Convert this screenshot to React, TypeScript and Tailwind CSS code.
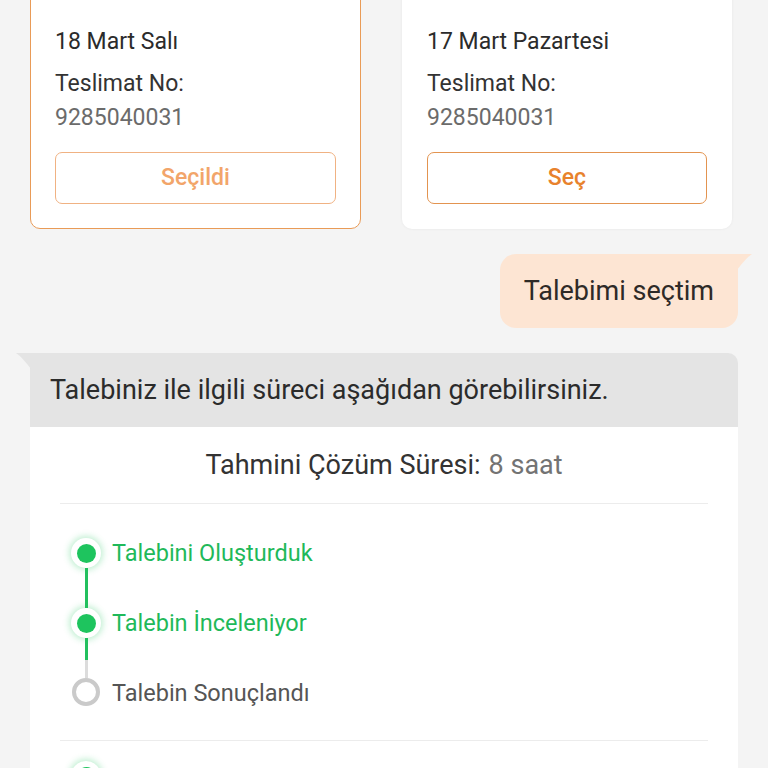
import type { ReactNode } from 'react';

const font = { fontFamily: 'Roboto, "Noto Sans", sans-serif' };

type Slot = {
  date: string;
  no: string;
  selected: boolean;
};

const slots: Slot[] = [
  { date: '18 Mart Salı', no: '9285040031', selected: true },
  { date: '17 Mart Pazartesi', no: '9285040031', selected: false },
];

const steps = [
  { label: 'Talebini Oluşturduk', done: true },
  { label: 'Talebin İnceleniyor', done: true },
  { label: 'Talebin Sonuçlandı', done: false },
];

function SlotCard({ slot }: { slot: Slot }) {
  return (
    <div
      className={
        slot.selected
          ? 'w-[331px] -mt-[30px] rounded-[10px] border-[1.5px] border-[#e99b57] bg-white px-[24px] pb-[24px] pt-[56px]'
          : 'w-[330px] -mt-[30px] rounded-[10px] bg-white px-[25px] pb-[25px] pt-[57px] shadow-[0_0_3px_rgba(0,0,0,0.06)]'
      }
    >
      <div className="text-[23px] leading-[30px] text-[#2b2b2b]">{slot.date}</div>
      <div className="mt-[12px] text-[23px] leading-[30px] text-[#333]">Teslimat No:</div>
      <div className="mt-[4px] text-[23px] leading-[30px] text-[#6b6b6b]">{slot.no}</div>
      <button
        className={
          slot.selected
            ? 'mt-[19px] flex h-[52px] w-full items-center justify-center rounded-[7px] border border-[#f0b283] bg-white text-[23px] font-medium text-[#f2a56a]'
            : 'mt-[19px] flex h-[52px] w-full items-center justify-center rounded-[7px] border border-[#e39450] bg-white text-[23px] font-medium text-[#e8822c]'
        }
      >
        {slot.selected ? 'Seçildi' : 'Seç'}
      </button>
    </div>
  );
}

function Dot({ done }: { done: boolean }) {
  if (!done) {
    return <div className="h-[28px] w-[28px] rounded-full border-[4px] border-[#cacaca] bg-white" />;
  }
  return (
    <div className="flex h-[30px] w-[30px] items-center justify-center rounded-full bg-white shadow-[0_0_6px_2px_rgba(34,197,94,0.28)]">
      <div className="h-[19px] w-[19px] rounded-full bg-[#1ec45e]" />
    </div>
  );
}

function Timeline() {
  return (
    <div className="flex flex-col pl-[41px]">
      {steps.map((step, i) => {
        const next = steps[i + 1];
        return (
          <div key={step.label} className="flex">
            <div className="flex w-[30px] flex-col items-center">
              <Dot done={step.done} />
              {next && (
                <div className="flex w-[3px] flex-1 flex-col">
                  {next.done ? (
                    <div className="flex-1 bg-[#22c05e]" />
                  ) : (
                    <>
                      <div className="h-[22px] bg-[#22c05e]" />
                      <div className="flex-1 bg-[#dcdcdc]" />
                    </>
                  )}
                </div>
              )}
            </div>
            <div
              className={
                step.done
                  ? 'ml-[11px] h-[30px] text-[23.5px] leading-[30px] text-[#1fb95a]'
                  : 'ml-[11px] h-[30px] text-[23.5px] leading-[30px] text-[#555]'
              }
            >
              {step.label}
            </div>
            {next && <div className="h-[70px]" />}
          </div>
        );
      })}
    </div>
  );
}

function Bubble({ children }: { children: ReactNode }) {
  return (
    <div className="flex justify-end pr-[30px]">
      <div className="relative flex h-[74px] items-center rounded-[16px] rounded-tr-none bg-[#fde5d3] px-[24px]">
        <span className="text-[27px] text-[#2e2a27]">{children}</span>
        <svg className="absolute -right-[14px] top-0" width="15" height="16" viewBox="0 0 15 16">
          <path d="M0 0 H15 Q9 4 0 16 Z" fill="#fde5d3" />
        </svg>
      </div>
    </div>
  );
}

export default function App() {
  return (
    <div className="h-[768px] overflow-hidden bg-[#f4f4f4]" style={font}>
      <div className="flex gap-[41px] pl-[30px]">
        {slots.map((s) => (
          <SlotCard key={s.date} slot={s} />
        ))}
      </div>

      <div className="mt-[25px]">
        <Bubble>Talebimi seçtim</Bubble>
      </div>

      <div className="mt-[25px] pl-[30px] pr-[30px]">
        <div className="relative flex h-[74px] items-center rounded-tr-[10px] bg-[#e4e4e4] pl-[20px]">
          <svg className="absolute -left-[14px] top-0" width="15" height="16" viewBox="0 0 15 16">
            <path d="M15 0 H0 Q6 4 15 16 Z" fill="#e4e4e4" />
          </svg>
          <span className="text-[27px] text-[#2b2b2b]">Talebiniz ile ilgili süreci aşağıdan görebilirsiniz.</span>
        </div>
        <div className="bg-white">
          <div className="flex h-[76px] items-center justify-center text-[27px]">
            <span className="text-[#333]">Tahmini Çözüm Süresi:</span>
            <span className="ml-[8px] text-[#737373]">8 saat</span>
          </div>
          <div className="mx-[30px] h-px bg-[#ececec]" />
          <div className="pt-[34px] pb-[32px]">
            <Timeline />
          </div>
          <div className="mx-[30px] h-px bg-[#ececec]" />
          <div className="flex pl-[41px] pt-[20px]">
            <Dot done />
          </div>
        </div>
      </div>
    </div>
  );
}
